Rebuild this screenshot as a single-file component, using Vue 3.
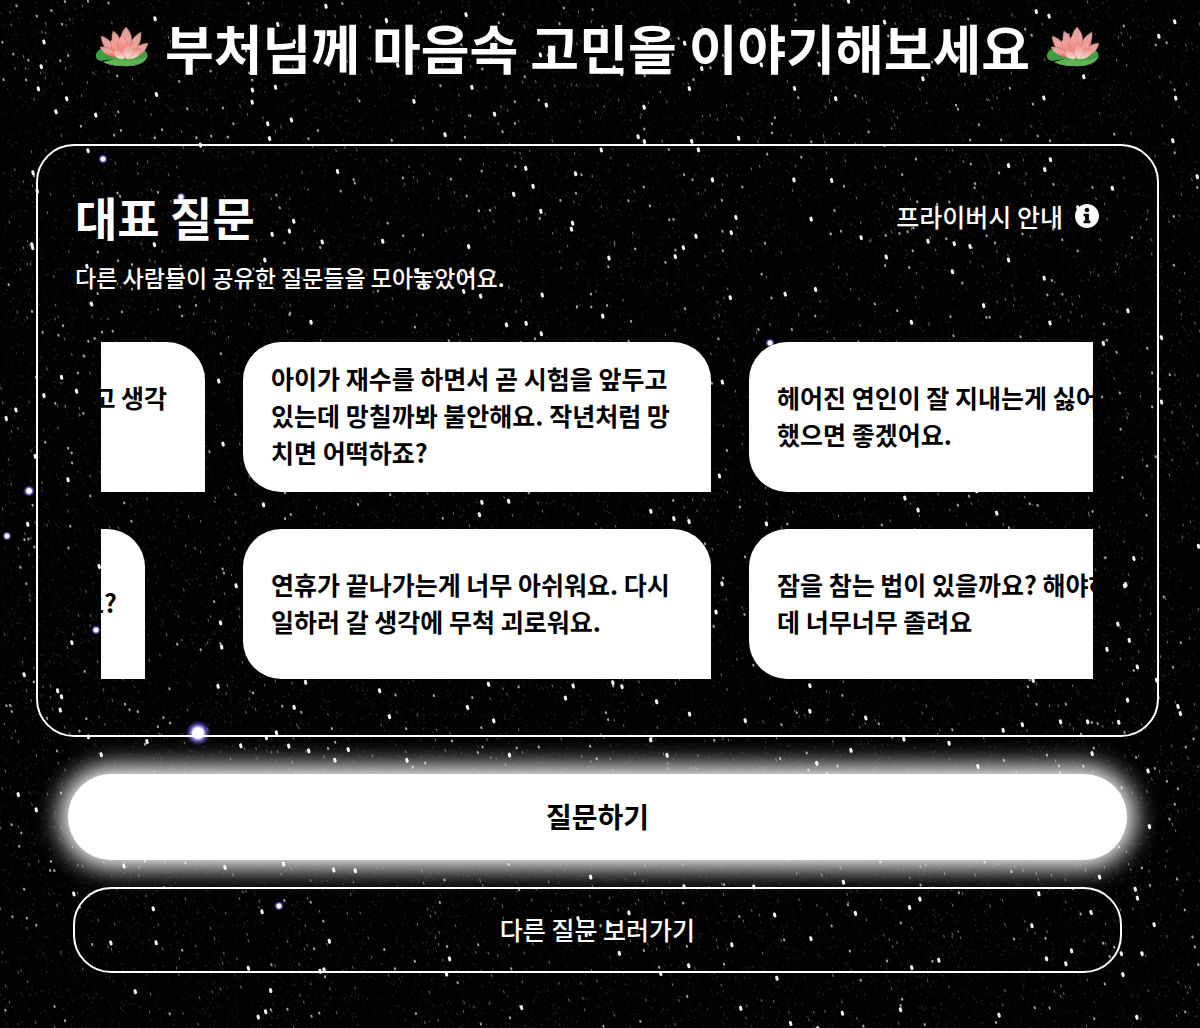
<template>
  <div class="page">
    <svg class="sky" viewBox="0 0 1200 1028" preserveAspectRatio="xMidYMid slice" aria-hidden="true">
      <defs>
        <radialGradient id="glow">
          <stop offset="0.4" stop-color="#ffffff" />
          <stop offset="0.6" stop-color="#8878e8" stop-opacity="0.8" />
          <stop offset="1" stop-color="#3020a0" stop-opacity="0" />
        </radialGradient>
      </defs>
      <path
        v-for="layer in starLayers"
        :key="layer.name"
        :class="['star', layer.name]"
        :d="layer.d"
      />
      <circle
        v-for="star in brightStars"
        :key="star.x"
        :cx="star.x"
        :cy="star.y"
        :r="star.r"
        fill="url(#glow)"
      />
    </svg>

    <main class="content">
      <h1 class="title">
        <svg v-for="side in ['left', 'right']" :key="side" :class="['lotus', side]" viewBox="0 0 54 42" aria-hidden="true">
          <defs>
            <linearGradient :id="'petal-' + side" x1="0" y1="0" x2="0" y2="1">
              <stop offset="0" stop-color="#d3a29f" />
              <stop offset="0.5" stop-color="#eda49d" />
              <stop offset="1" stop-color="#ef5f59" />
            </linearGradient>
            <linearGradient :id="'inner-' + side" x1="0" y1="0" x2="0" y2="1">
              <stop offset="0" stop-color="#f3b0a8" />
              <stop offset="1" stop-color="#f4716a" />
            </linearGradient>
            <linearGradient :id="'front-' + side" x1="0" y1="0" x2="0" y2="1">
              <stop offset="0" stop-color="#ef8f87" />
              <stop offset="1" stop-color="#f6dcd6" />
            </linearGradient>
          </defs>
          <path d="M1 31C0 24 8 21 16 22L40 21C50 22 54 27 52 32C49 38 39 41 27 40C19 40 12 38 8 36L20 33L6 35C3 34 1 33 1 31Z" fill="#3f9e3f" />
          <path d="M8 36L20 33C35 36 47 34 52 30C51 37 39 41 27 40C19 40 12 38 8 36Z" fill="#5fb350" />
          <g :fill="`url(#petal-${side})`" stroke="#b56b68" stroke-width="0.5">
            <path d="M6 10C14 12 20 19 22 29C12 27 7 20 6 10Z" />
            <path d="M46 6C47 16 42 25 33 30C31 21 37 11 46 6Z" />
            <path d="M18 5C25 9 28 17 26 29C18 24 15 14 18 5Z" />
            <path d="M31 1C38 8 39 18 31 28C23 20 24 8 31 1Z" />
            <path d="M53 17C51 26 44 32 33 32C36 23 44 18 53 17Z" />
            <path d="M5 21C13 20 20 25 24 31C15 32 8 28 5 21Z" />
          </g>
          <g :fill="`url(#inner-${side})`" stroke="#cf706a" stroke-width="0.5">
            <path d="M16 14C23 17 26 23 26 31C19 29 15 22 16 14Z" />
            <path d="M43 15C44 24 39 31 31 33C30 25 35 18 43 15Z" />
            <path d="M27 9C34 15 35 24 28 31C21 25 21 16 27 9Z" />
          </g>
          <g :fill="`url(#front-${side})`" stroke="#d98f88" stroke-width="0.5">
            <path d="M46 23C46 30 40 34 31 33C33 27 38 23 46 23Z" />
            <path d="M33 18C40 23 40 30 32 33C26 29 27 22 33 18Z" />
            <path d="M20 23C28 25 31 30 29 33C21 34 17 29 20 23Z" />
          </g>
        </svg>
        <span class="title-text">부처님께 마음속 고민을 이야기해보세요</span>
      </h1>

      <section class="panel">
        <div class="panel-head">
          <h2 class="panel-title">대표 질문</h2>
          <button type="button" class="privacy">
            프라이버시 안내
            <svg class="info" viewBox="8 8 496 496" aria-hidden="true">
              <path d="M256 8C119.043 8 8 119.083 8 256c0 136.997 111.043 248 248 248s248-111.003 248-248C504 119.083 392.957 8 256 8zm0 76c28 0 48 20 48 46s-20 46-48 46-48-20-48-46 20-46 48-46zm72 308c0 9-5 14-14 14h-116c-9 0-14-5-14-14v-28c0-9 5-14 14-14h18v-86h-18c-9 0-14-5-14-14v-28c0-9 5-14 14-14h84c9 0 14 5 14 14v128h18c9 0 14 5 14 14v28z" />
            </svg>
          </button>
        </div>
        <p class="panel-desc">다른 사람들이 공유한 질문들을 모아놓았어요.</p>

        <div class="slider">
          <ul v-for="(row, i) in questionRows" :key="i" class="track">
            <li v-for="question in row" :key="question" class="slot">
              <p class="bubble">{{ question }}</p>
            </li>
          </ul>
        </div>
      </section>

      <div class="actions">
        <button type="button" class="btn-ask">질문하기</button>
        <button type="button" class="btn-more">다른 질문 보러가기</button>
      </div>
    </main>
  </div>
</template>

<script setup>
const questionRows = [
  [
    '저한테만 늘 왜 이런 일이 생기냐고 생각해요.',
    '아이가 재수를 하면서 곧 시험을 앞두고 있는데 망칠까봐 불안해요. 작년처럼 망치면 어떡하죠?',
    '헤어진 연인이 잘 지내는게 싫어요. 꼭 망했으면 좋겠어요.'
  ],
  [
    '좋아하는 사람과 언제쯤 만날까요?',
    '연휴가 끝나가는게 너무 아쉬워요. 다시 일하러 갈 생각에 무척 괴로워요.',
    '잠을 참는 법이 있을까요? 해야하는 일인데 너무너무 졸려요'
  ]
]

// 고정 시드로 항상 같은 밤하늘을 그린다
let seed = 20240214
function random() {
  seed = (seed * 1664525 + 1013904223) % 4294967296
  return seed / 4294967296
}

function makeStars(count, length) {
  let d = ''
  for (let i = 0; i < count; i++) {
    const x = (random() * 1200).toFixed(1)
    const y = (random() * 1028).toFixed(1)
    d += `M${x} ${y}l${(length * 0.25).toFixed(1)} ${length}`
  }
  return d
}

const starLayers = [
  { name: 'dust', d: makeStars(20000, 1) },
  { name: 'faint', d: makeStars(5000, 1) },
  { name: 'dim', d: makeStars(1500, 2) },
  { name: 'mid', d: makeStars(700, 1) },
  { name: 'bright', d: makeStars(420, 2) }
]

const brightStars = [
  { x: 198, y: 733, r: 13 },
  { x: 103, y: 159, r: 5 },
  { x: 181, y: 197, r: 5 },
  { x: 770, y: 343, r: 5 },
  { x: 29, y: 491, r: 6 },
  { x: 7, y: 536, r: 5 },
  { x: 96, y: 630, r: 5 },
  { x: 279, y: 906, r: 5 }
]
</script>

<style>
body {
  background: #020202;
}
</style>

<style scoped>
.page {
  position: relative;
  min-height: 100vh;
  box-sizing: border-box;
  overflow: hidden;
  color: #ffffff;
  font-family: 'Noto Sans CJK KR', sans-serif;
  font-weight: 500;
}

.sky {
  position: absolute;
  inset: 0;
  width: 100%;
  height: 100%;
}

.star {
  fill: none;
  stroke: #ffffff;
  stroke-linecap: round;
}

.dust {
  stroke: #1a1a1a;
  stroke-width: 1;
}

.faint {
  stroke: #343434;
  stroke-width: 1;
}

.dim {
  stroke: #707070;
  stroke-width: 1;
}

.mid {
  stroke: #a0a4a4;
  stroke-width: 2;
}

.bright {
  stroke: #f0f6f6;
  stroke-width: 3;
}

.content {
  position: relative;
  padding: 10px 41px 54px 36px;
}

.title {
  display: flex;
  justify-content: center;
  align-items: center;
  gap: 16px;
  margin: 0 0 60px;
  font-size: 53px;
  font-weight: 700;
  line-height: 74px;
  white-space: nowrap;
}

.lotus {
  width: 54px;
  height: 42px;
  flex-shrink: 0;
}

.lotus.right {
  order: 1;
}

.panel {
  border: 2px solid #ffffff;
  border-radius: 38px;
  padding: 36px 64px 56px 63px;
}

.panel-head {
  display: flex;
  justify-content: space-between;
  align-items: center;
  margin: 0 -6px 0 -26px;
}

.panel-title {
  margin: 0;
  font-size: 46px;
  font-weight: 700;
  line-height: 68px;
}

.privacy {
  display: flex;
  align-items: center;
  gap: 12px;
  padding: 0;
  border: 0;
  background: none;
  color: inherit;
  font: inherit;
  font-size: 25px;
  line-height: 38px;
  cursor: pointer;
}

.info {
  width: 24px;
  height: 24px;
  fill: #ffffff;
}

.panel-desc {
  margin: 9px 0 47px -26px;
  font-size: 23px;
  line-height: 36px;
}

.slider {
  display: flex;
  flex-direction: column;
  gap: 37px;
  overflow: hidden;
}

.track {
  display: flex;
  gap: 38px;
  width: max-content;
  margin: 0 0 0 -364px;
  padding: 0;
  list-style: none;
}

.slot {
  display: flex;
  width: 468px;
}

.bubble {
  display: flex;
  align-items: center;
  min-height: 150px;
  box-sizing: border-box;
  margin: 0;
  padding: 17px 28px 20px;
  border-radius: 38px 38px 0 38px;
  background: #ffffff;
  color: #000000;
  font-size: 25px;
  font-weight: 700;
  line-height: 37px;
}

.actions {
  display: flex;
  flex-direction: column;
  gap: 27px;
  margin-top: 37px;
  padding: 0 37px;
}

.btn-ask,
.btn-more {
  height: 86px;
  padding: 0 28px 2px;
  border-radius: 43px;
  color: #ffffff;
  font-family: inherit;
  font-weight: 500;
  font-size: 25px;
  cursor: pointer;
}

.btn-ask {
  margin: 0 -5px;
  border: 0;
  background: #ffffff;
  box-shadow: 0 0 24px 8px #ffffff;
  color: #000000;
  font-size: 28px;
  font-weight: 700;
}

.btn-more {
  border: 2px solid #ffffff;
  border-radius: 38px;
  background: none;
}
</style>
